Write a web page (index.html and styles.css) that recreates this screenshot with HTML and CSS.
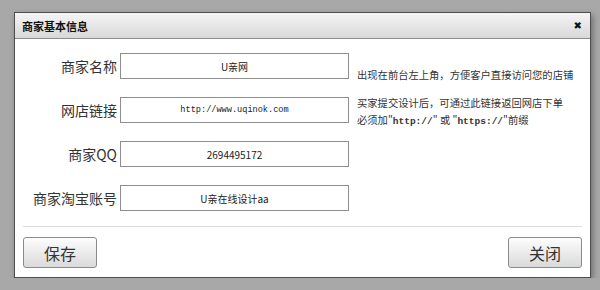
FILE: index.html
```html
<!DOCTYPE html>
<html lang="zh">
<head>
    <meta charset="UTF-8">
    <title>商家基本信息</title>
    <link rel="stylesheet" href="styles.css">
</head>
<body>
    <div class="dialog">
        <div class="dialog-head">
            <span class="dialog-title">商家基本信息</span>
            <span class="dialog-close">&#x2716;</span>
        </div>

        <div class="form">
            <div class="row">
                <label class="row-label">商家名称</label>
                <input class="field" type="text" value="U亲网">
                <div class="hint hint-low">出现在前台左上角，方便客户直接访问您的店铺</div>
            </div>
            <div class="row">
                <label class="row-label">网店链接</label>
                <input class="field field-mono" type="text" value="http://www.uqinok.com">
                <div class="hint hint-high">买家提交设计后，可通过此链接返回网店下单<br>必须加"<span class="mono">http://</span>" 或 "<span class="mono">https://</span>"前缀</div>
            </div>
            <div class="row">
                <label class="row-label">商家QQ</label>
                <input class="field" type="text" value="2694495172">
            </div>
            <div class="row">
                <label class="row-label">商家淘宝账号</label>
                <input class="field" type="text" value="U亲在线设计aa">
            </div>
        </div>

        <div class="dialog-foot">
            <button class="btn">保存</button>
            <button class="btn">关闭</button>
        </div>
    </div>
</body>
</html>
```

FILE: styles.css
```css
body {
    margin: 0;
    padding: 12px 0 0 14px;
    background-color: #a8a8a8;
    font-family: "Noto Sans CJK SC", "Liberation Sans", sans-serif;
    color: #333;
}
.dialog {
    width: 577px;
    box-sizing: border-box;
    background-color: #fff;
    border: 1px solid #4e4e4e;
    box-shadow: 2px 3px 6px rgba(0, 0, 0, 0.35);
}
.dialog-head {
    height: 25px;
    display: flex;
    align-items: center;
    justify-content: space-between;
    padding: 0 8px 0 7px;
    background: linear-gradient(#f5f5f5, #d8d8d8);
    border-bottom: 1px solid #8c8c8c;
}
.dialog-title {
    font-size: 11px;
    font-weight: bold;
    color: #111;
}
.dialog-close {
    font-size: 10px;
    color: #111;
    font-family: "DejaVu Sans", sans-serif;
}
.form {
    padding-top: 14px;
    display: flex;
    flex-direction: column;
    gap: 18px;
}
.row {
    display: flex;
    align-items: flex-start;
    height: 26px;
}
.row-label {
    width: 105px;
    padding-right: 3px;
    box-sizing: border-box;
    text-align: right;
    font-size: 14px;
    line-height: 26px;
    color: #333;
}
.field {
    width: 229px;
    height: 26px;
    box-sizing: border-box;
    margin: 0;
    border: 1px solid #8e8e8e;
    background: #fff;
    text-align: center;
    font-family: "Noto Sans CJK SC", sans-serif;
    font-size: 10px;
    color: #222;
}
.field-mono {
    font-family: "Liberation Mono", monospace;
    font-size: 8.6px;
}
.hint {
    margin-left: 8px;
    font-size: 10.3px;
    line-height: 17px;
    color: #333;
    white-space: nowrap;
}
.hint-low {
    margin-top: 13px;
}
.hint-high {
    margin-top: -3px;
}
.mono {
    font-family: "Liberation Mono", monospace;
    font-weight: bold;
    font-size: 9.5px;
}
.dialog-foot {
    margin: 15px 8px 0;
    padding: 10px 0 9px;
    border-top: 1px solid #dcdcdc;
    display: flex;
    justify-content: space-between;
}
.btn {
    width: 74px;
    height: 31px;
    border: 1px solid #8a8a8a;
    border-radius: 3px;
    background: linear-gradient(#fdfdfd, #dadada);
    font-family: "Noto Sans CJK SC", sans-serif;
    font-size: 16px;
    color: #333;
    padding: 0;
}
```
